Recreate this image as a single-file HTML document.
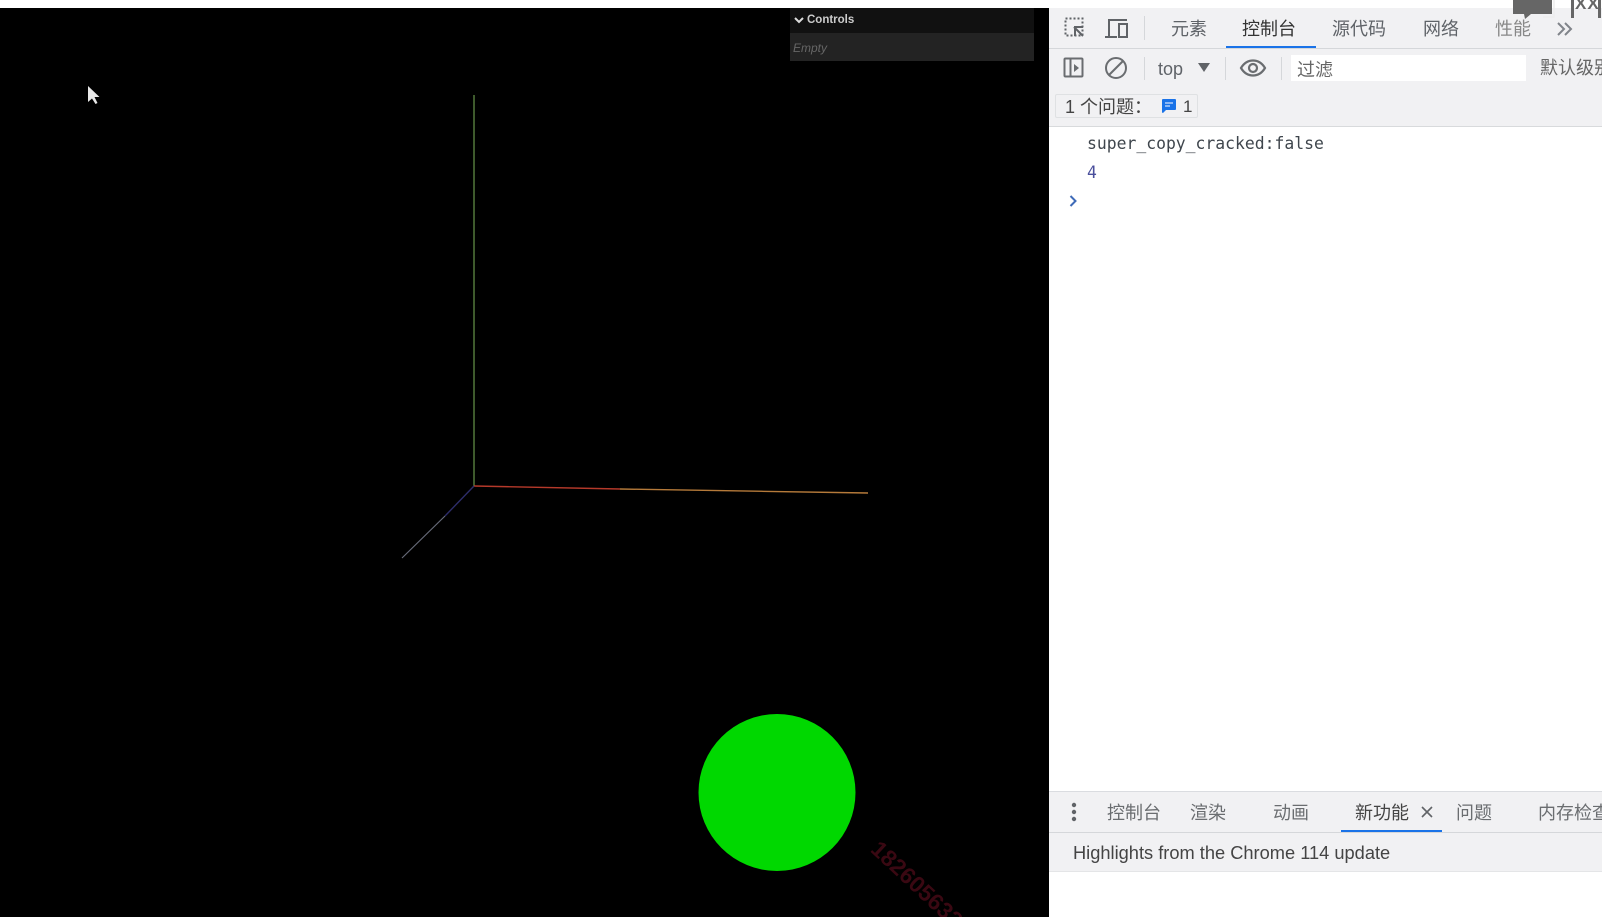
<!DOCTYPE html>
<html lang="zh"><head><meta charset="utf-8"><title>Console</title>
<style>
html,body{margin:0;padding:0;width:1602px;height:917px;overflow:hidden;background:#fff}
#r{position:absolute;left:0;top:0;width:1602px;height:917px;overflow:hidden;background:#fff;font-family:"Liberation Sans","Noto Sans CJK SC",sans-serif;filter:blur(.35px)}
#r div,#r span,#r svg{position:absolute}
.t{white-space:nowrap;line-height:20px;font-size:18px;color:#5f6368;transform:translateY(-50%)}
.sep{width:1px;background:#d5d7da}
</style></head><body><div id="r">
<div style="left:0;top:8px;width:1049px;height:909px;background:#000"></div>
<div style="left:1049px;top:8px;width:553px;height:40px;background:#f1f1f3"></div>
<div style="left:1049px;top:48px;width:553px;height:1px;background:#d5d7da"></div>
<div style="left:1049px;top:49px;width:553px;height:77px;background:#f1f1f3"></div>
<div style="left:1049px;top:126px;width:553px;height:1px;background:#d8dadc"></div>
<div style="left:1049px;top:791px;width:553px;height:81px;background:#f1f1f3;border-top:1px solid #dadce0;border-bottom:1px solid #e4e5e7;box-sizing:border-box"></div>
<div style="left:1049px;top:832px;width:553px;height:1px;background:#d5d7da"></div>

<!-- canvas -->
<div style="left:790px;top:8px;width:244px;height:25px;background:#111"></div>
<div style="left:790px;top:33px;width:244px;height:28px;background:#232323"></div>
<svg style="left:793px;top:15px" width="12" height="10"><path d="M2 3l4 4 4-4" fill="none" stroke="#ddd" stroke-width="2"/></svg>
<span class="t" style="left:807px;top:20px;font-size:11.500px;font-weight:bold;color:#ccc">Controls</span>
<span class="t" style="left:793px;top:48px;font-size:12px;font-style:italic;color:#666">Empty</span>
<svg style="left:0;top:0" width="1049" height="917">
<line x1="474" y1="486" x2="474" y2="95" stroke="#5f8a44" stroke-width="1.300"/>
<line x1="474" y1="486" x2="620" y2="489" stroke="#b5392a" stroke-width="1.400"/>
<line x1="620" y1="489" x2="868" y2="493" stroke="#b57a3a" stroke-width="1.400"/>
<line x1="474" y1="486" x2="445" y2="516" stroke="#2d2d6a" stroke-width="1.400"/>
<line x1="445" y1="516" x2="402" y2="558" stroke="#666a78" stroke-width="1.200"/>
<ellipse cx="777" cy="792.5" rx="78.500" ry="78.500" fill="#00d800"/>
<path d="M88 86v16l4-3.500 3.500 5.500 2-1-3-6h5z" fill="#e8e8e8"/>
</svg>
<span class="t" style="left:875px;top:845px;font-size:23px;font-weight:bold;color:#3a0812;transform:rotate(43deg);transform-origin:0 50%;line-height:24px;margin-top:-12px">182605632</span>

<!-- top bar piece -->
<svg style="left:1513px;top:0" width="44" height="22"><path d="M0 0h39v14H18l-6 5-1-5H0z" fill="#666"/><path d="M41 0v17H30" fill="none" stroke="#eee" stroke-width="1.500"/></svg>
<div style="left:1571px;top:0;width:3px;height:18px;background:#666"></div>
<span class="t" style="left:1575px;top:4px;font-size:17px;font-weight:bold;color:#666;letter-spacing:1px">XX</span>
<div style="left:1598px;top:0;width:3px;height:18px;background:#666"></div>

<!-- toolbar 1 -->
<svg style="left:1064px;top:17px" width="22" height="22" fill="none" stroke="#606367"><rect x="1.500" y="1.500" width="17" height="17" stroke-width="2" stroke-dasharray="2 2" /><path d="M11 19v-9h8M10 10l9 9" stroke-width="2" stroke="#606367"/></svg>
<svg style="left:1104px;top:17px" width="26" height="22" fill="none" stroke="#606367" stroke-width="2"><path d="M1 20h12M5 19V3h18"/><rect x="15" y="7" width="8" height="13"/></svg>
<div class="sep" style="left:1144px;top:16px;height:24px"></div>
<span class="t" style="left:1171px;top:29px">元素</span>
<span class="t" style="left:1242px;top:29px;color:#333">控制台</span>
<div style="left:1226px;top:46px;width:90px;height:2px;background:#1a73e8"></div>
<span class="t" style="left:1332px;top:29px">源代码</span>
<span class="t" style="left:1423px;top:29px">网络</span>
<span class="t" style="left:1495px;top:29px;color:#888">性能</span>
<svg style="left:1556px;top:21px" width="18" height="16" fill="none" stroke="#80848a" stroke-width="2"><path d="M2 2l6 6-6 6M9 2l6 6-6 6"/></svg>

<!-- toolbar 2 -->
<svg style="left:1063px;top:57px" width="22" height="22" fill="none" stroke="#6a6d70" stroke-width="2"><rect x="1.500" y="1.500" width="18" height="18" rx="1"/><path d="M7.500 2v18"/><path d="M11 7l5 4-5 4z" fill="#6a6d70" stroke="none"/></svg>
<svg style="left:1104px;top:56px" width="24" height="24" fill="none" stroke="#6a6d70" stroke-width="2"><circle cx="12" cy="12" r="10"/><path d="M5 19L19 5"/></svg>
<div class="sep" style="left:1144px;top:57px;height:23px"></div>
<span class="t" style="left:1158px;top:69px;font-size:18px">top</span>
<svg style="left:1198px;top:63px" width="12" height="10"><path d="M0 0h12l-6 9z" fill="#606367"/></svg>
<div class="sep" style="left:1225px;top:57px;height:23px"></div>
<svg style="left:1239px;top:57px" width="28" height="22" fill="none" stroke="#6a6d70" stroke-width="2.200"><path d="M2 11c6-10 18-10 24 0c-6 10-18 10-24 0z"/><circle cx="14" cy="11" r="4"/></svg>
<div class="sep" style="left:1281px;top:57px;height:23px"></div>
<div style="left:1291px;top:55px;width:235px;height:26px;background:#fff"></div>
<span class="t" style="left:1297px;top:70px;font-size:18px;color:#666">过滤</span>
<span class="t" style="left:1540px;top:68px;font-size:18px;color:#666">默认级别</span>

<!-- issues -->
<div style="left:1055px;top:94px;width:143px;height:24px;border:1px solid #dfe1e3;box-sizing:border-box;border-radius:2px"></div>
<span class="t" style="left:1065px;top:107px;font-size:18px;color:#444">1 个问题：</span>
<svg style="left:1161px;top:98px" width="16" height="16"><path d="M1 2q0-1 1-1h12q1 0 1 1v9q0 1-1 1H5l-3 3q-1 0-1-1z" fill="#1a73e8"/><path d="M4 5h8M4 8h5" stroke="#cfe0fa" stroke-width="1.200"/></svg>
<span class="t" style="left:1183px;top:107px;font-size:17px;color:#444">1</span>

<!-- console -->
<span class="t" style="left:1087px;top:144px;font-family:'DejaVu Sans Mono',monospace;font-size:16.400px;color:#3f464d">super_copy_cracked:false</span>
<span class="t" style="left:1087px;top:173px;font-family:'DejaVu Sans Mono',monospace;font-size:16.400px;color:#4a4f9c">4</span>
<svg style="left:1069px;top:195px" width="9" height="12" fill="none" stroke="#3f6bb8" stroke-width="2"><path d="M1.500 1l5 5-5 5"/></svg>

<!-- drawer -->
<svg style="left:1071px;top:802px" width="6" height="20" fill="#606367"><circle cx="3" cy="3" r="2.200"/><circle cx="3" cy="10" r="2.200"/><circle cx="3" cy="17" r="2.200"/></svg>
<span class="t" style="left:1107px;top:813px;color:#6a6d70">控制台</span>
<span class="t" style="left:1190px;top:813px;color:#6a6d70">渲染</span>
<span class="t" style="left:1273px;top:813px;color:#6a6d70">动画</span>
<span class="t" style="left:1355px;top:813px;color:#444">新功能</span>
<svg style="left:1420px;top:805px" width="14" height="14" fill="none" stroke="#606367" stroke-width="1.600"><path d="M2 2l10 10M12 2L2 12"/></svg>
<div style="left:1341px;top:830px;width:101px;height:2px;background:#1a73e8"></div>
<span class="t" style="left:1456px;top:813px;color:#6a6d70">问题</span>
<span class="t" style="left:1538px;top:813px;color:#6a6d70">内存检查</span>
<span class="t" style="left:1073px;top:853px;font-size:18.250px;color:#444">Highlights from the Chrome 114 update</span>
</div></body></html>
